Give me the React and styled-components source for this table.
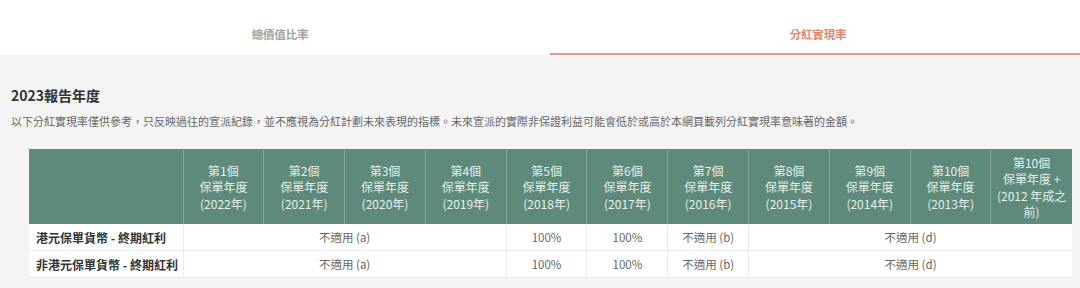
import styled, { createGlobalStyle } from 'styled-components'

const GlobalStyle = createGlobalStyle`
  body {
    margin: 0;
    background: #f4f4f4;
    font-family: "Noto Sans CJK TC", "Noto Sans", sans-serif;
  }
`

const years = [
  ['第1個', '2022'],
  ['第2個', '2021'],
  ['第3個', '2020'],
  ['第4個', '2019'],
  ['第5個', '2018'],
  ['第6個', '2017'],
  ['第7個', '2016'],
  ['第8個', '2015'],
  ['第9個', '2014'],
  ['第10個', '2013'],
]

const rows = ['港元保單貨幣 - 終期紅利', '非港元保單貨幣 - 終期紅利']

export default function App() {
  return (
    <Page>
      <GlobalStyle />
      <Tabs>
        <Tab>總價值比率</Tab>
        <Tab active>分紅實現率</Tab>
      </Tabs>
      <Section>
        <Heading>2023報告年度</Heading>
        <Note>
          以下分紅實現率僅供參考，只反映過往的宣派紀錄，並不應視為分紅計劃未來表現的指標。未來宣派的實際非保證利益可能會低於或高於本網頁載列分紅實現率意味著的金額。
        </Note>
        <Table>
          <colgroup>
            <col style={{ width: 154 }} />
            {Array.from({ length: 11 }).map((_, i) => (
              <col key={i} style={{ width: 80.8 }} />
            ))}
          </colgroup>
          <thead>
            <tr>
              <Th />
              {years.map(([n, y]) => (
                <Th key={y}>
                  {n}
                  <br />
                  保單年度
                  <br />({y}年)
                </Th>
              ))}
              <Th>
                第10個
                <br />
                保單年度 +
                <br />
                (2012 年成之前)
              </Th>
            </tr>
          </thead>
          <tbody>
            {rows.map(label => (
              <tr key={label}>
                <Label>{label}</Label>
                <Td colSpan={4}>不適用 (a)</Td>
                <Td>100%</Td>
                <Td>100%</Td>
                <Td>不適用 (b)</Td>
                <Td colSpan={5}>不適用 (d)</Td>
              </tr>
            ))}
          </tbody>
        </Table>
      </Section>
    </Page>
  )
}

const Page = styled.div`
  width: 1080px;
  height: 288px;
  overflow: hidden;
`
const Tabs = styled.div`
  display: grid;
  grid-template-columns: 550px 530px;
  background: #fff;
  height: 55px;
`
const Tab = styled.div`
  display: flex;
  align-items: center;
  justify-content: center;
  padding-top: 14px;
  box-sizing: border-box;
  font-size: 11.5px;
  font-weight: 700;
  letter-spacing: -0.2px;
  color: ${p => (p.active ? '#e2866c' : '#a3a3a3')};
  border-bottom: 2px solid ${p => (p.active ? '#d4a08e' : 'transparent')};
  padding-left: ${p => (p.active ? '6px' : '10px')};
`
const Section = styled.div`
  padding: 28px 8px 0 11px;
`
const Heading = styled.h2`
  margin: 0;
  font-size: 14px;
  font-weight: 700;
  color: #333;
  line-height: 24px;
`
const Note = styled.p`
  margin: 5px 0 0;
  font-size: 11px;
  line-height: 18px;
  color: #666;
`
const Table = styled.table`
  margin: 19px 0 0 18px;
  width: 1043px;
  table-layout: fixed;
  border-collapse: collapse;
  background: #fff;
`
const Th = styled.th`
  height: 75px;
  padding: 3px 5px 1px;
  box-sizing: border-box;
  background: #5e8a7b;
  color: #e6eee9;
  font-size: 12px;
  font-weight: 400;
  line-height: 16.5px;
  text-align: center;
  border-left: 1px solid #84a89a;
  &:first-child {
    border-left: none;
  }
`
const Td = styled.td`
  height: 26px;
  padding: 0 5px;
  font-size: 11.5px;
  color: #666;
  text-align: center;
  border-left: 1px solid #ececec;
  border-bottom: 1px solid #ececec;
`
const Label = styled.td`
  height: 26px;
  padding: 0 7px;
  white-space: nowrap;
  font-size: 12px;
  font-weight: 700;
  color: #333;
  border-bottom: 1px solid #ececec;
`
